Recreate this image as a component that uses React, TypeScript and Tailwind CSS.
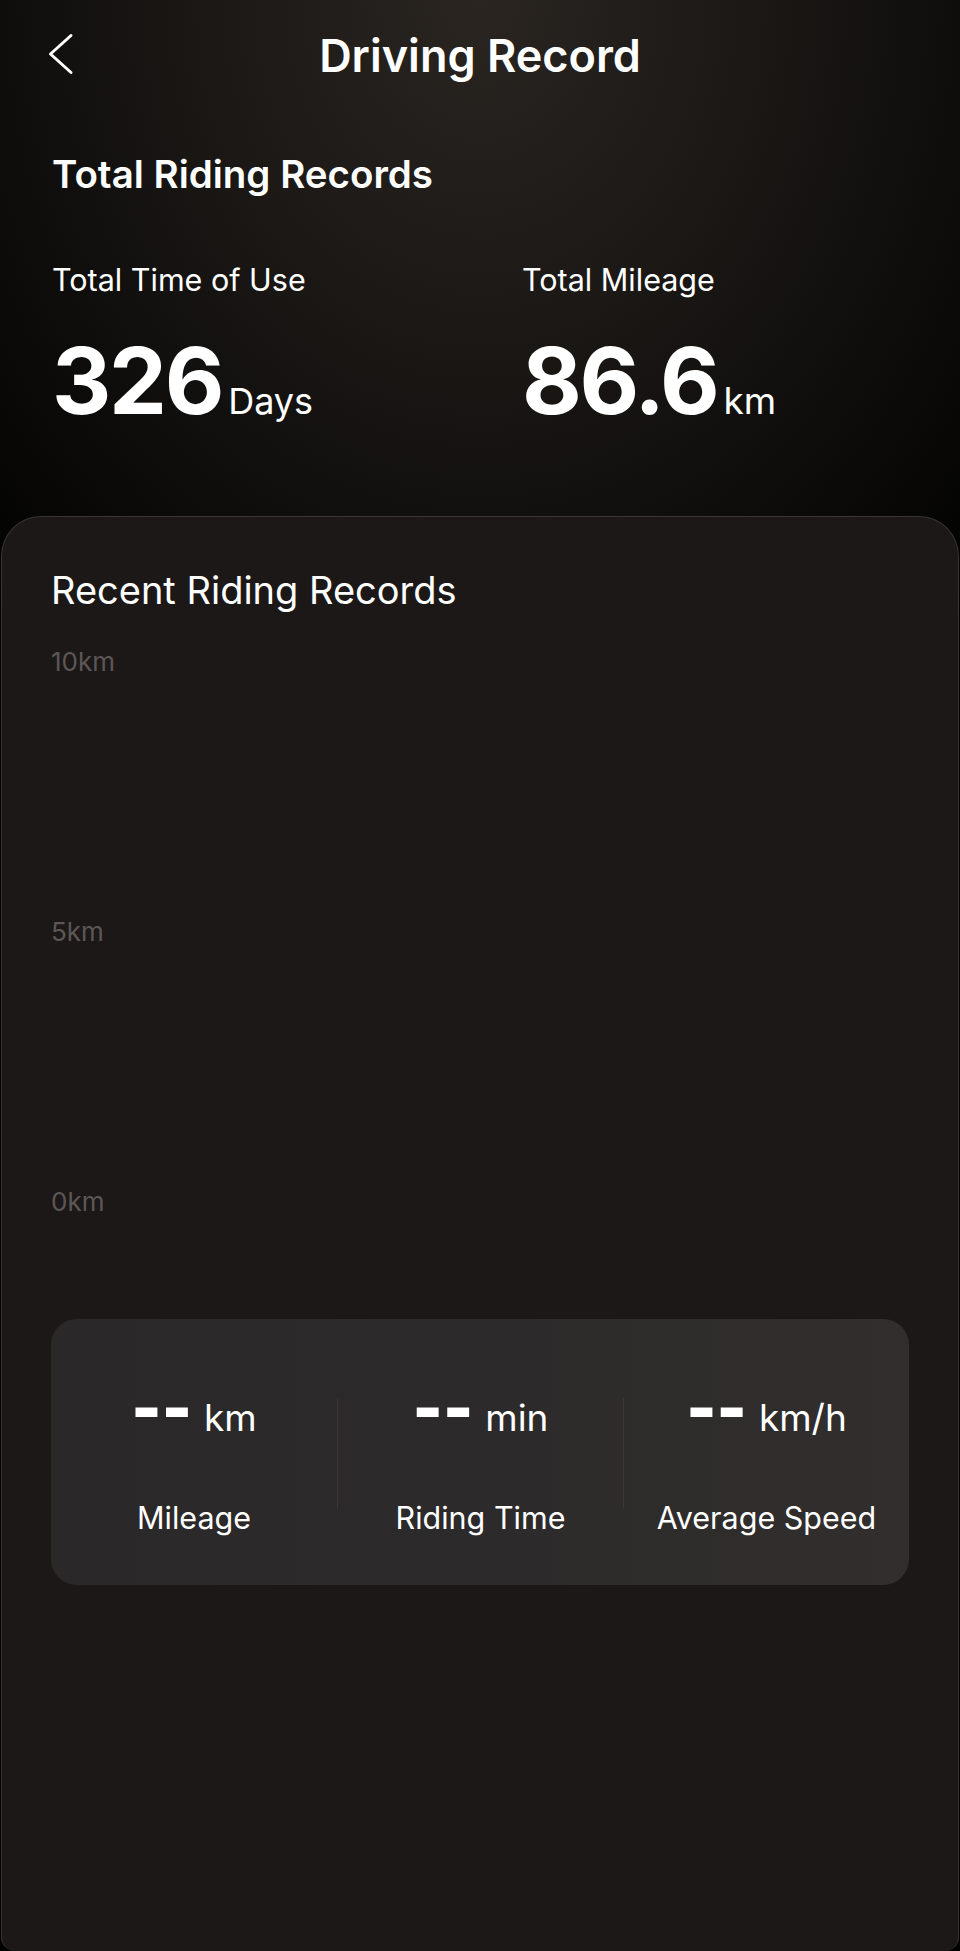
type Stat = {
  unit: string;
  label: string;
};

const stats: Stat[] = [
  { unit: "km", label: "Mileage" },
  { unit: "min", label: "Riding Time" },
  { unit: "km/h", label: "Average Speed" },
];

const axisLabels = ["10km", "5km", "0km"];

function BackIcon() {
  return (
    <svg width="26" height="42" viewBox="0 0 26 42" fill="none" aria-hidden>
      <path
        d="M23 2.5 L2.5 21 L23 39.5"
        stroke="#fff"
        strokeWidth="3"
        strokeLinecap="round"
        strokeLinejoin="round"
      />
    </svg>
  );
}

function StatColumn({ unit, label }: Stat) {
  return (
    <div className="flex flex-1 flex-col items-center pt-[57px]">
      <div className="flex items-baseline">
        <span className="text-[64px] font-black leading-none text-white">--</span>
        <span className="ml-[12px] text-[37px] leading-none text-white">{unit}</span>
      </div>
      <p className="mt-[63px] text-[30.5px] leading-none text-white">{label}</p>
    </div>
  );
}

export default function App() {
  return (
    <div className="flex h-[1951px] w-full flex-col bg-black bg-[radial-gradient(ellipse_75%_45%_at_50%_0%,#2a2521_0%,#141210_55%,#000000_100%)] font-['Inter','Noto_Sans',sans-serif] text-white">
      <header className="grid grid-cols-[1fr_auto_1fr] items-start pt-[33px]">
        <div className="pl-[48px]">
          <BackIcon />
        </div>
        <h1 className="text-[45px] font-semibold leading-none">Driving Record</h1>
        <div />
      </header>

      <section className="px-[52px]">
        <h2 className="mt-[77px] text-[38.5px] font-semibold leading-none">
          Total Riding Records
        </h2>
        <div className="grid grid-cols-[470px_1fr]">
          <div>
            <p className="mt-[71px] text-[30.5px] leading-none">Total Time of Use</p>
            <div className="mt-[40px] flex items-baseline">
              <span className="text-[92px] font-bold leading-none tracking-tight">326</span>
              <span className="ml-[6px] text-[36px] leading-none">Days</span>
            </div>
          </div>
          <div>
            <p className="mt-[71px] text-[30.5px] leading-none">Total Mileage</p>
            <div className="mt-[40px] flex items-baseline">
              <span className="text-[92px] font-bold leading-none tracking-tight">86.6</span>
              <span className="ml-[6px] text-[37px] leading-none">km</span>
            </div>
          </div>
        </div>
      </section>

      <main className="mx-[1px] mt-[89px] flex-1 rounded-t-[40px] rounded-b-[14px] border-x border-t border-[#3a3535] bg-[#1c1818] px-[49px]">
        <h2 className="pt-[54px] text-[38px] leading-none">Recent Riding Records</h2>

        <div className="mt-[40px] flex flex-col gap-[244px]">
          {axisLabels.map((label) => (
            <span key={label} className="text-[26px] leading-none text-[#5c5757]">
              {label}
            </span>
          ))}
        </div>

        <div className="mt-[104px] flex h-[266px] rounded-[26px] bg-gradient-to-r from-[#2a2828] via-[#2c2a2a] to-[#322e2e]">
          {stats.map((stat, i) => (
            <div key={stat.label} className="flex flex-1">
              {i > 0 ? <div className="mt-[79px] h-[111px] w-px bg-[#3a3636]" /> : null}
              <StatColumn {...stat} />
            </div>
          ))}
        </div>
      </main>
    </div>
  );
}
